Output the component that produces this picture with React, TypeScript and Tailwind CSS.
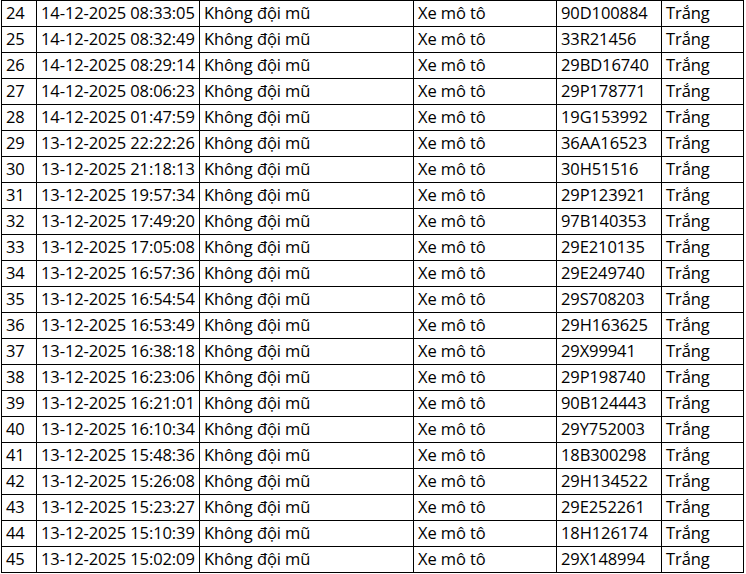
import React from 'react'

type Row = [number, string, string, string]

// stt, time, plate, colour
const rows: Row[] = [
  [24, '14-12-2025 08:33:05', '90D100884', 'Trắng'],
  [25, '14-12-2025 08:32:49', '33R21456', 'Trắng'],
  [26, '14-12-2025 08:29:14', '29BD16740', 'Trắng'],
  [27, '14-12-2025 08:06:23', '29P178771', 'Trắng'],
  [28, '14-12-2025 01:47:59', '19G153992', 'Trắng'],
  [29, '13-12-2025 22:22:26', '36AA16523', 'Trắng'],
  [30, '13-12-2025 21:18:13', '30H51516', 'Trắng'],
  [31, '13-12-2025 19:57:34', '29P123921', 'Trắng'],
  [32, '13-12-2025 17:49:20', '97B140353', 'Trắng'],
  [33, '13-12-2025 17:05:08', '29E210135', 'Trắng'],
  [34, '13-12-2025 16:57:36', '29E249740', 'Trắng'],
  [35, '13-12-2025 16:54:54', '29S708203', 'Trắng'],
  [36, '13-12-2025 16:53:49', '29H163625', 'Trắng'],
  [37, '13-12-2025 16:38:18', '29X99941', 'Trắng'],
  [38, '13-12-2025 16:23:06', '29P198740', 'Trắng'],
  [39, '13-12-2025 16:21:01', '90B124443', 'Trắng'],
  [40, '13-12-2025 16:10:34', '29Y752003', 'Trắng'],
  [41, '13-12-2025 15:48:36', '18B300298', 'Trắng'],
  [42, '13-12-2025 15:26:08', '29H134522', 'Trắng'],
  [43, '13-12-2025 15:23:27', '29E252261', 'Trắng'],
  [44, '13-12-2025 15:10:39', '18H126174', 'Trắng'],
  [45, '13-12-2025 15:02:09', '29X148994', 'Trắng'],
]

const cell = 'border border-black h-[26px] pl-[4px] pr-0 py-0 text-left align-middle whitespace-nowrap leading-none'

export default function App() {
  return (
    <div className="w-[746px] h-[574px] bg-white overflow-hidden pl-[1px]">
      <table
        className="border-collapse table-fixed text-[16.5px] text-black font-['Open_Sans',sans-serif] tracking-[-0.1px]"
      >
        <colgroup>
          <col className="w-[35px]" />
          <col className="w-[163px]" />
          <col className="w-[214px]" />
          <col className="w-[143px]" />
          <col className="w-[105px]" />
          <col className="w-[82px]" />
        </colgroup>
        <tbody>
          {rows.map(([no, time, plate, color]) => (
            <tr key={no}>
              <td className={cell}>{no}</td>
              <td className={cell}>{time}</td>
              <td className={cell}>Không đội mũ</td>
              <td className={cell}>Xe mô tô</td>
              <td className={cell}>{plate}</td>
              <td className={cell}>{color}</td>
            </tr>
          ))}
        </tbody>
      </table>
    </div>
  )
}
